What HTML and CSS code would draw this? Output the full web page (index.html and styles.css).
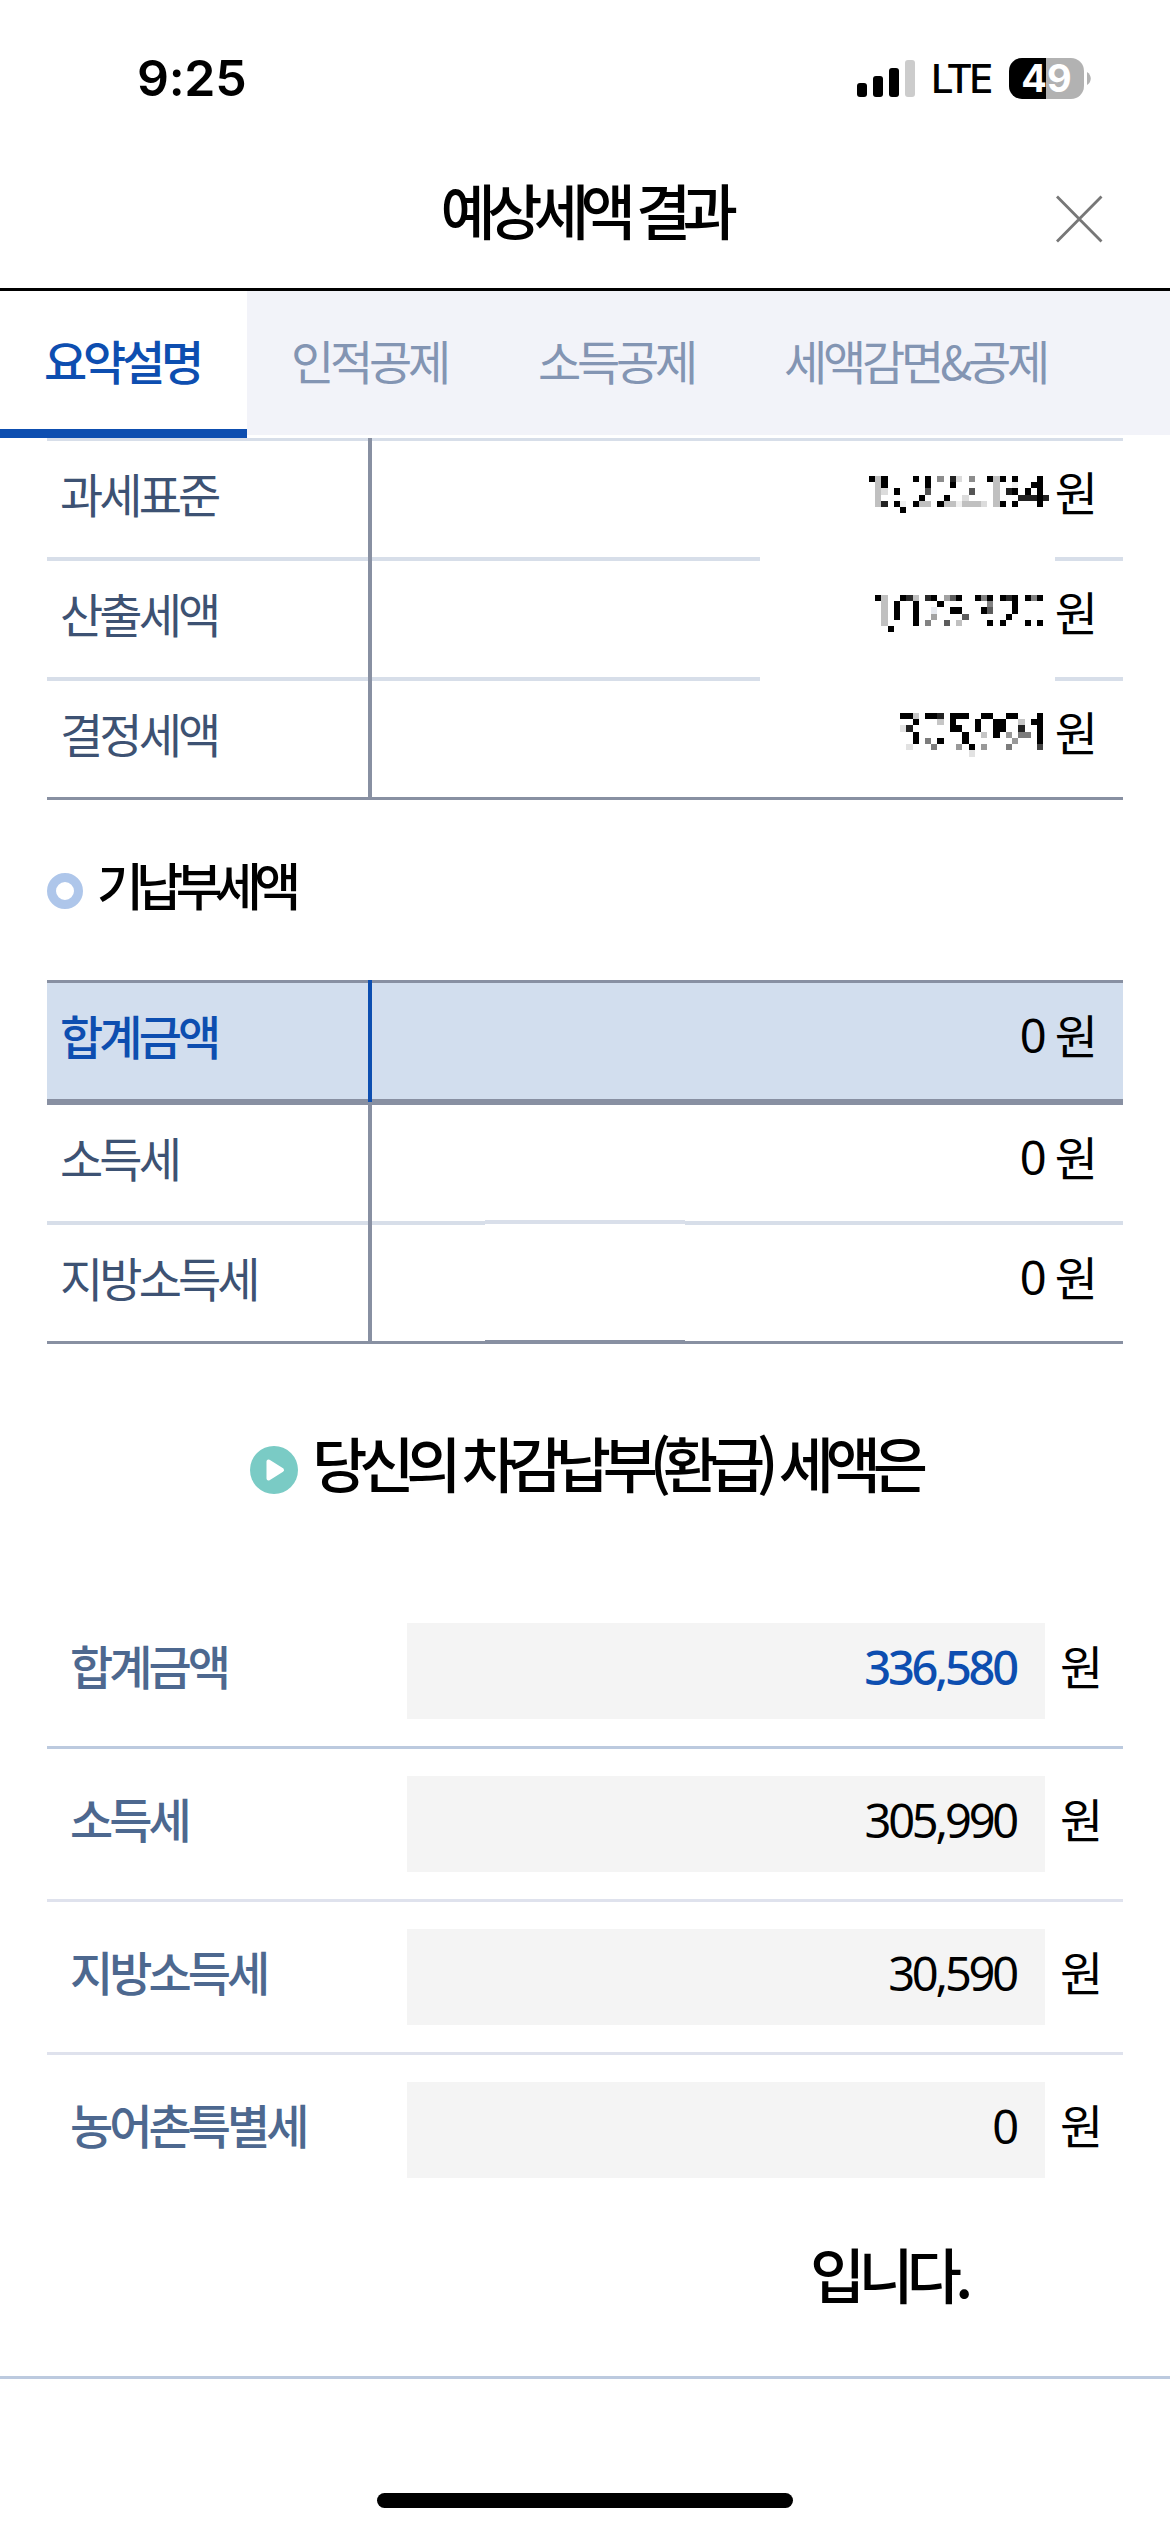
FILE: index.html
```html
<!DOCTYPE html>
<html lang="ko">
<head>
<meta charset="utf-8">
<title>예상세액 결과</title>
<link rel="stylesheet" href="styles.css">
</head>
<body>
<div class="status-bar">
  <span class="clock">9:25</span>
  <div class="status-icons">
    <svg class="signal" width="58" height="37" viewBox="0 0 58 37">
      <rect x="0" y="23" width="10" height="14" rx="3"/>
      <rect x="16" y="16" width="10" height="21" rx="3"/>
      <rect x="32" y="8" width="10" height="29" rx="3"/>
      <rect x="48" y="0" width="10" height="37" rx="3" fill="#ccc"/>
    </svg>
    <span class="network">LTE</span>
    <span class="battery">49</span>
    <svg class="battery-tip" width="4" height="13" viewBox="0 0 4 13"><path d="M0 0C5 3 5 10 0 13Z" fill="#b2b2b2"/></svg>
  </div>
</div>

<header class="header">
  <h1 class="title">예상세액 결과</h1>
  <svg class="close" width="48" height="48" viewBox="0 0 48 48"><path d="M2 1.500 46.500 46.500M46.500 1.500 2 46.500" stroke="#777" stroke-width="2.8" fill="none"/></svg>
</header>

<nav class="tabs">
  <a class="tab tab-active">요약설명</a>
  <a class="tab">인적공제</a>
  <a class="tab">소득공제</a>
  <a class="tab tab-last">세액감면&amp;공제</a>
</nav>

<main>
  <section class="table table-first">
    <div class="row"><span class="label">과세표준</span><span class="value">원</span></div>
    <div class="row"><span class="label">산출세액</span><span class="value">원</span></div>
    <div class="row"><span class="label">결정세액</span><span class="value">원</span></div>
    <svg class="mosaic" width="295" height="320" viewBox="0 0 295 320" shape-rendering="crispEdges">
      <g transform="translate(109 19.1) scale(6.222)">
        <path stroke="#000" d="M0 0h1M2 0h1M7 0h1M9 0h1M19 0h1M21 0h1M23 0h1M27 0h1M2 1h1M9 1h1M13 1h1M26 1h2M4 2h1M23 2h1M25 2h1M27 2h1M8 3h1M12 3h1M27 3h1M4 4h1M7 4h1M11 4h1M21 4h1M23 4h1M27 4h1M5 5h1"/>
        <path stroke="#222" d="M13 0h1M22 2h1M24 3h3M28 3h1M2 4h1"/>
        <path stroke="#555" d="M16 2h1M9 2h1"/>
        <path stroke="#8c8c8c" d="M11 0h1M16 0h1"/>
        <path stroke="#c0c0c0" d="M1 0h1M1 1h1M1 2h1M1 3h1M1 4h1M20 0h1M20 1h1M20 2h1M20 3h1M20 4h1M8 4h2M12 4h2M15 4h3"/>
        <path stroke="#dcdcdc" d="M14 0h1M2 2h1M15 3h1M18 4h1"/>
        <path stroke="#f0f0f0" d="M23 1h1M5 4h1M14 4h1"/>
      </g>
      <g transform="translate(109 138.1) scale(6.222)">
        <path stroke="#000" d="M1 0h1M5 0h1M10 0h1M14 0h1M17 0h1M19 0h1M21 0h1M23 0h1M25 0h1M27 0h1M4 1h1M7 1h1M11 1h1M23 1h1M4 2h1M7 2h1M13 2h2M18 2h1M23 2h1M4 3h1M7 3h1M22 3h1M7 4h1M19 4h1M21 4h1M25 4h1M27 4h1M3 5h1"/>
        <path stroke="#2a2a2a" d="M6 0h1M9 0h1M22 0h1"/>
        <path stroke="#5c5c5c" d="M13 0h1M19 2h1M15 3h1M12 4h1"/>
        <path stroke="#828282" d="M18 0h1M26 0h1M19 1h1M9 4h1"/>
        <path stroke="#a2a2a2" d="M12 0h1M10 3h1"/>
        <path stroke="#c0c0c0" d="M2 0h1M7 0h1M2 1h1M2 2h1M2 3h1M2 4h1M14 4h1"/>
        <path stroke="#e5e8ee" d="M10 2h1"/>
      </g>
      <g transform="translate(109 256.1) scale(6.222)">
        <path stroke="#000" d="M5 0h2M9 0h2M13 0h3M18 0h2M22 0h2M27 0h1M7 1h1M13 1h1M17 1h1M20 1h2M26 1h2M13 2h2M17 2h1M20 2h2M27 2h1M7 3h1M15 3h1M20 3h1M27 3h1M7 4h1M11 4h1M15 4h1M27 4h1M16 5h1"/>
        <path stroke="#222" d="M11 0h1M6 2h1M24 2h1"/>
        <path stroke="#444" d="M27 5h1"/>
        <path stroke="#7c7c7c" d="M24 3h2M9 4h1M10 5h1M22 5h1"/>
        <path stroke="#999" d="M22 3h1M23 4h1M14 5h1M18 5h1"/>
        <path stroke="#c6c6c6" d="M7 0h1M11 1h1M24 1h1M18 3h1"/>
        <path stroke="#e2e2e2" d="M5 2h1M6 5h1M16 6h1"/>
      </g>
    </svg>
  </section>

  <h2 class="subtitle"><i class="ring"></i><span class="subtitle-text">기납부세액</span></h2>

  <section class="table table-paid">
    <div class="row row-total"><span class="label">합계금액</span><span class="value"><b class="num">0</b>원</span></div>
    <div class="row"><span class="label">소득세</span><span class="value"><b class="num">0</b>원</span></div>
    <div class="row"><span class="label">지방소득세</span><span class="value"><b class="num">0</b>원</span></div>
    <i class="patch"></i>
  </section>

  <h2 class="result-title">
    <svg class="play" width="48" height="48" viewBox="0 0 48 48"><circle cx="24" cy="24" r="24" fill="#7acbc5"/><path d="M18.500 15.500V32.500L32 24Z" fill="#fff" stroke="#fff" stroke-width="4" stroke-linejoin="round"/></svg>
    <span>당신의 차감납부(환급) 세액은</span>
  </h2>

  <section class="result">
    <div class="result-row result-total"><span class="result-label">합계금액</span><span class="field">336,580</span><span class="unit">원</span></div>
    <div class="result-row"><span class="result-label">소득세</span><span class="field">305,990</span><span class="unit">원</span></div>
    <div class="result-row"><span class="result-label">지방소득세</span><span class="field">30,590</span><span class="unit">원</span></div>
    <div class="result-row"><span class="result-label">농어촌특별세</span><span class="field">0</span><span class="unit">원</span></div>
  </section>

  <p class="closing">입니다.</p>
</main>

<footer class="footer"><i class="home-indicator"></i></footer>
</body>
</html>
```
FILE: styles.css
```css
* { box-sizing: border-box; }

body {
  margin: 0;
  width: 1170px;
  height: 2532px;
  display: flex;
  flex-direction: column;
  overflow: hidden;
  background: #fff;
  color: #000;
  font-family: "Noto Sans CJK KR", sans-serif;
  font-size: 47px;
  letter-spacing: -3.9px;
  line-height: 72px;
}

h1, h2, p { margin: 0; font-weight: 500; }
i, b { font-style: normal; font-weight: 400; }

.status-bar {
  height: 156px;
  flex: none;
  display: flex;
  justify-content: space-between;
  align-items: center;
  padding: 0 79px 0 137px;
  font-family: Inter, sans-serif;
  letter-spacing: 0;
}
.clock { font-size: 50px; font-weight: 600; letter-spacing: -0.3px; }
.status-icons { display: flex; align-items: center; }
.network { font-size: 40px; font-weight: 500; width: 60px; margin: 1px 18px 0 16px; letter-spacing: -3.4px; white-space: nowrap; }
.battery {
  width: 75px;
  height: 41px;
  border-radius: 13px;
  background: linear-gradient(90deg, #000 37px, #b2b2b2 37px);
  color: #fff;
  font-size: 38px;
  font-weight: 700;
  line-height: 41px;
  text-align: center;
}
.battery-tip { margin-left: 3px; }

.header {
  position: relative;
  height: 135px;
  flex: none;
  border-bottom: 3px solid #000;
}
.title { font-size: 60px; letter-spacing: -8.4px; line-height: 90px; padding-top: 8px; text-align: center; }
.close { position: absolute; right: 67px; top: 39px; }

.tabs { height: 147px; flex: none; display: flex; background: linear-gradient(#f2f3f9 144px, #fff 144px); }
.tab { width: 246px; padding: 33px 0 0 45px; color: #8395b3; letter-spacing: -4.2px; white-space: nowrap; }
.tab-active { width: 247px; padding-left: 44px; background: #fff; border-bottom: 9px solid #0d4eb0; color: #0d4eb0; font-weight: 500; }
.tab-active + .tab { padding-left: 44px; }
.tab-last { width: 431px; }

main { flex: none; display: flex; flex-direction: column; border-bottom: 3px solid #bccadf; height: 1941px; }

.table { position: relative; flex: none; margin: 0 47px; border-bottom: 3px solid #8890a2; }
.table::after { content: ""; position: absolute; left: 321px; top: 0; bottom: 0; width: 4px; background: #8890a2; }
.table-first { height: 362px; border-top: 3px solid #d7dee9; }
.table-first::after { top: -3px; }
.row { height: 120px; display: flex; justify-content: space-between; border-bottom: 4px solid #d7dee9; padding: 16px 29px 0 13px; }
.row:nth-child(3) { height: 116px; border-bottom: 0; }
.label { color: #3d5273; }
.value { display: flex; margin-top: -2px; }
.num { margin-right: 12px; padding-top: 1px; font-family: "Noto Sans", sans-serif; }
.table-paid .value { margin-top: -1px; }
.mosaic { position: absolute; left: 713px; top: 19px; background: #fff; }
.mosaic path { stroke-width: 1; }

.subtitle {
  display: flex;
  align-items: center;
  gap: 14px;
  margin: 47px 0 0 47px;
  height: 88px;
  font-size: 51px;
  letter-spacing: -7.6px;
}
.subtitle-text { padding-bottom: 14px; }
.ring { width: 36px; height: 36px; border: 9px solid #aec6ea; border-radius: 50%; }

.table-paid { margin-top: 45px; height: 364px; border-top: 3px solid #8890a2; }
.row-total { height: 122px; background: #d2deee; border-bottom: 6px solid #8890a2; }
.row-total::after { content: ""; position: absolute; z-index: 1; left: 321px; top: -3px; width: 4px; height: 122px; background: #0d4eb0; }
.row-total .label { color: #0d4eb0; font-weight: 500; }
.patch { position: absolute; left: 438px; top: 237px; width: 200px; height: 124px; background: #fff; border-top: 4px solid #d9dfea; border-bottom: 4px solid #8890a2; }

.result-title { display: flex; justify-content: center; gap: 14px; margin-top: 73px; height: 93px; font-size: 60px; letter-spacing: -8.2px; line-height: 90px; white-space: nowrap; }
.play { margin-top: 29px; }

.result { margin: 86px 47px 0; }
.result-row { height: 153px; display: flex; padding: 27px 0 0 23px; line-height: 84px; border-bottom: 3px solid #dfe2ed; }
.result-row:last-child { border-bottom: 0; }
.result-total { border-bottom-color: #bccadf; }
.result-label { flex: none; width: 337px; color: #4d688f; font-weight: 500; letter-spacing: -4px; }
.field { flex: none; width: 638px; height: 96px; padding-right: 29px; background: #f4f4f4; text-align: right; font-family: "Noto Sans", sans-serif; letter-spacing: -3.2px; line-height: 88px; }
.result-total .field { color: #0d4eb0; font-weight: 500; }
.unit { margin-left: 15px; }

.closing { margin: 20px 0 0 810px; font-size: 60px; letter-spacing: -6.8px; line-height: 90px; }

.footer { flex: 1; display: flex; justify-content: center; align-items: flex-end; padding-bottom: 24px; }
.home-indicator { width: 416px; height: 15px; border-radius: 8px; background: #000; }
```
